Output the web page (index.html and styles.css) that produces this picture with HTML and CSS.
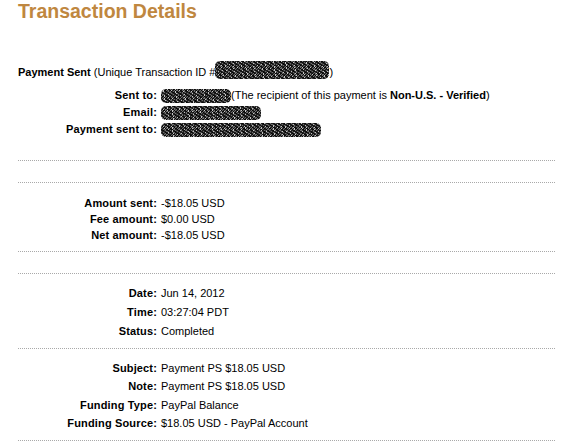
FILE: index.html
```html
<!DOCTYPE html>
<html>
<head>
    <title>Transaction Details</title>
    <link rel="stylesheet" href="styles.css">
</head>
<body>
    <!-- page heading -->
    <h1 class="title">Transaction Details</h1>

    <div class="details">
        <!-- who the money went to -->
        <p class="headline"><b>Payment Sent</b> (Unique Transaction ID #<span class="blot blot-id"></span>)</p>
        <div class="rows rows-party">
            <div class="label">Sent to:</div>
            <div class="value"><span class="blot blot-name"></span>(The recipient of this payment is <b>Non-U.S. - Verified</b>)</div>
            <div class="label">Email:</div>
            <div class="value"><span class="blot blot-email"></span></div>
            <div class="label">Payment sent to:</div>
            <div class="value"><span class="blot blot-to"></span></div>
        </div>

        <hr class="rule rule-first">
        <hr class="rule">

        <!-- amounts -->
        <div class="rows rows-amount">
            <div class="label">Amount sent:</div>
            <div class="value">-$18.05 USD</div>
            <div class="label">Fee amount:</div>
            <div class="value">$0.00 USD</div>
            <div class="label">Net amount:</div>
            <div class="value">-$18.05 USD</div>
        </div>

        <hr class="rule rule-amount">
        <hr class="rule">

        <!-- when -->
        <div class="rows rows-date">
            <div class="label">Date:</div>
            <div class="value">Jun 14, 2012</div>
            <div class="label">Time:</div>
            <div class="value">03:27:04 PDT</div>
            <div class="label">Status:</div>
            <div class="value">Completed</div>
        </div>

        <hr class="rule rule-date">

        <!-- what for -->
        <div class="rows rows-note">
            <div class="label">Subject:</div>
            <div class="value">Payment PS $18.05 USD</div>
            <div class="label">Note:</div>
            <div class="value">Payment PS $18.05 USD</div>
            <div class="label">Funding Type:</div>
            <div class="value">PayPal Balance</div>
            <div class="label">Funding Source:</div>
            <div class="value">$18.05 USD - PayPal Account</div>
        </div>

        <hr class="rule rule-note">
    </div>
</body>
</html>
```

FILE: styles.css
```css
/* whole page */
body {
    margin: 0;
    padding: 0 0 0 18px;
    background: #fff;
    color: #000;
    font-family: "Liberation Sans", Arial, sans-serif;
    font-size: 11px;
}

/* orange heading at the top */
.title {
    margin: 0;
    font-size: 19.5px;
    line-height: 23px;
    color: #bf8740;
}

.details {
    width: 537px;
}

p { margin: 0; }

.headline {
    margin-top: 41px;
    line-height: 16px;
}

/* label / value pairs */
.rows {
    display: grid;
    grid-template-columns: 139px auto;
    column-gap: 4px;
}
.label {
    font-weight: bold;
    text-align: right;
    letter-spacing: 0.15px;
}
.value {
    white-space: nowrap;
}

.rows-party { margin-top: 7px; line-height: 17px; }
.rows-amount { margin-top: 12px; line-height: 16px; }
.rows-date { margin-top: 10px; line-height: 19px; }
.rows-note { margin-top: 10px; line-height: 18.4px; }

/* grey dotted separators */
.rule {
    border: 0;
    border-top: 1px dotted #a9a9a9;
    height: 0;
    margin: 21px 0 0 0;
}
.rule-first { margin-top: 22px; }
.rule-amount { margin-top: 8px; }
.rule-date { margin-top: 7px; }
.rule-note { margin-top: 7px; }

/* scribbled-out private info */
.blot {
    display: inline-block;
    vertical-align: middle;
    height: 14px;
    border-radius: 5px;
    background:
        repeating-linear-gradient(35deg, rgba(0,0,0,0.85) 0 1px, transparent 1px 3px),
        repeating-linear-gradient(-50deg, rgba(0,0,0,0.7) 0 1px, transparent 1px 2px),
        repeating-linear-gradient(80deg, rgba(255,255,255,0.6) 0 1px, transparent 1px 4px),
        #6e6e6e;
}
.blot-id { width: 114px; height: 18px; margin-top: -6px; }
.blot-name { width: 70px; }
.blot-email { width: 100px; }
.blot-to { width: 160px; }
```
